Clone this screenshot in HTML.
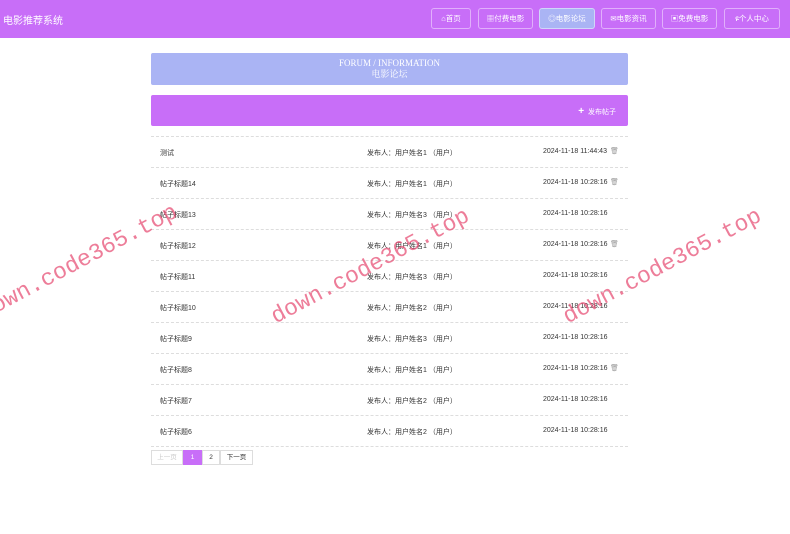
<!DOCTYPE html>
<html><head><meta charset="utf-8"><style>
*{margin:0;padding:0;box-sizing:border-box}
body{width:790px;height:534px;background:#fff;font-family:"Liberation Sans","Noto Sans CJK SC",sans-serif;position:relative;overflow:hidden;font-size:7px;color:#333}
.hd{position:absolute;left:0;top:0;width:790px;height:38px;background:#c86ef8}
.logo{position:absolute;left:3px;top:12px;color:#fff;font-size:10px}
.nb{position:absolute;top:8px;height:21px;border:1px solid rgba(255,255,255,.45);border-radius:3px;color:#fff;font-size:7.5px;line-height:19px;text-align:center}
.nb.on{background:#aab4f4}
.ban{position:absolute;left:151px;top:53px;width:477px;height:32px;background:#aab4f4;border-radius:2px;color:#fff;text-align:center;font-family:"Liberation Serif","Noto Serif CJK SC",serif;font-size:9px;line-height:11px;padding-top:5px}
.bar{position:absolute;left:151px;top:95px;width:477px;height:31px;background:#c86ef8;border-radius:2px;color:#fff;font-size:7px}
.bar span{position:absolute;right:12px;top:11px}
.row{position:absolute;left:151px;width:477px;height:31px;border-top:1px dashed #ddd}
.row .t{position:absolute;left:9px;top:11px}
.row .u{position:absolute;left:216px;top:11px}
.row .d{position:absolute;left:392px;top:11px}
.row .x{position:absolute;left:459px;top:10px;color:#999}
.pg{position:absolute;top:450px;height:15px;border:1px solid #ddd;line-height:13px;text-align:center;font-size:6.5px}
.wm{position:absolute;color:rgba(230,70,110,.7);font-family:"Liberation Mono",monospace;font-size:23px;line-height:22px;height:22px;transform:rotate(-28deg);transform-origin:left bottom;white-space:nowrap}
</style></head><body>
<div class="hd"><div class="logo">电影推荐系统</div>
<div class="nb" style="left:431px;width:40px">⌂首页</div>
<div class="nb" style="left:478px;width:55px">▦付费电影</div>
<div class="nb on" style="left:539px;width:56px">◎电影论坛</div>
<div class="nb" style="left:601px;width:55px">✉电影资讯</div>
<div class="nb" style="left:662px;width:55px">▣免费电影</div>
<div class="nb" style="left:724px;width:56px">ዩ个人中心</div>
</div>
<div class="ban">FORUM / INFORMATION<br>电影论坛</div>
<div class="bar"><span><b style="font-size:10px">+</b>&nbsp; 发布帖子</span></div>
<div class="row" style="top:136px"><span class="t">测试</span><span class="u">发布人：用户姓名1 （用户）</span><span class="d">2024-11-18 11:44:43</span><span class="x">🗑</span></div>
<div class="row" style="top:167px"><span class="t">帖子标题14</span><span class="u">发布人：用户姓名1 （用户）</span><span class="d">2024-11-18 10:28:16</span><span class="x">🗑</span></div>
<div class="row" style="top:198px"><span class="t">帖子标题13</span><span class="u">发布人：用户姓名3 （用户）</span><span class="d">2024-11-18 10:28:16</span></div>
<div class="row" style="top:229px"><span class="t">帖子标题12</span><span class="u">发布人：用户姓名1 （用户）</span><span class="d">2024-11-18 10:28:16</span><span class="x">🗑</span></div>
<div class="row" style="top:260px"><span class="t">帖子标题11</span><span class="u">发布人：用户姓名3 （用户）</span><span class="d">2024-11-18 10:28:16</span></div>
<div class="row" style="top:291px"><span class="t">帖子标题10</span><span class="u">发布人：用户姓名2 （用户）</span><span class="d">2024-11-18 10:28:16</span></div>
<div class="row" style="top:322px"><span class="t">帖子标题9</span><span class="u">发布人：用户姓名3 （用户）</span><span class="d">2024-11-18 10:28:16</span></div>
<div class="row" style="top:353px"><span class="t">帖子标题8</span><span class="u">发布人：用户姓名1 （用户）</span><span class="d">2024-11-18 10:28:16</span><span class="x">🗑</span></div>
<div class="row" style="top:384px"><span class="t">帖子标题7</span><span class="u">发布人：用户姓名2 （用户）</span><span class="d">2024-11-18 10:28:16</span></div>
<div class="row" style="top:415px"><span class="t">帖子标题6</span><span class="u">发布人：用户姓名2 （用户）</span><span class="d">2024-11-18 10:28:16</span></div>
<div class="row" style="top:446px;height:1px"></div>
<div class="pg" style="left:151px;width:32px;color:#ccc">上一页</div>
<div class="pg" style="left:183px;width:19px;background:#c86ef8;border-color:#c86ef8;color:#fff">1</div>
<div class="pg" style="left:202px;width:18px">2</div>
<div class="pg" style="left:220px;width:33px">下一页</div>
<div class="wm" style="left:-14px;top:302px">down.code365.top</div>
<div class="wm" style="left:278px;top:306px">down.code365.top</div>
<div class="wm" style="left:570px;top:306px">down.code365.top</div>
</body></html>
